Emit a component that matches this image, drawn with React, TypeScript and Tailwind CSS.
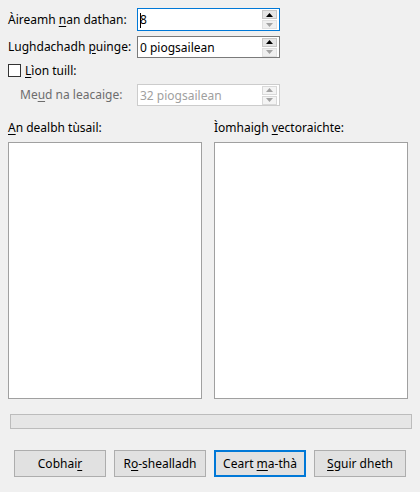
import React from "react";

const font = { fontFamily: '"Noto Sans", "Segoe UI", "Liberation Sans", sans-serif' };

function U({ children }: { children: React.ReactNode }) {
  return <span className="underline underline-offset-2 decoration-1">{children}</span>;
}

function Arrow({ up, dim }: { up?: boolean; dim?: boolean }) {
  return (
    <svg width="7" height="4" viewBox="0 0 7 4" className="block">
      {up ? (
        <polygon points="3.5,0 7,4 0,4" fill={dim ? "#a3a3a3" : "#000"} />
      ) : (
        <polygon points="0,0 7,0 3.5,4" fill={dim ? "#a3a3a3" : "#000"} />
      )}
    </svg>
  );
}

function Spin({
  value,
  focused,
  disabled,
  caret,
}: {
  value: string;
  focused?: boolean;
  disabled?: boolean;
  caret?: boolean;
}) {
  const border = focused
    ? "border-[#0078d7]"
    : disabled
    ? "border-[#cccccc]"
    : "border-[#7a7a7a]";
  return (
    <div
      className={`flex h-full w-[143px] items-center border bg-white ${border} ${
        disabled ? "bg-[#f0f0f0]" : ""
      }`}
    >
      <div
        className={`relative flex-1 pl-[2px] pt-px text-[12px] ${
          disabled ? "text-[#a0a0a0]" : "text-black"
        }`}
      >
        {caret && (
          <span className="absolute left-[2px] top-0 h-[15px] w-px bg-black" />
        )}
        {value}
      </div>
      <div className="mr-[2px] flex h-[19px] w-[15px] flex-col gap-px">
        <div
          className={`flex flex-1 items-center justify-center border ${
            disabled ? "border-[#d9d9d9] bg-[#f4f4f4]" : "border-[#c7c7c7] bg-[#e5e5e5]"
          }`}
        >
          <Arrow up dim={disabled} />
        </div>
        <div
          className={`flex flex-1 items-center justify-center border ${
            disabled ? "border-[#d9d9d9] bg-[#f4f4f4]" : "border-[#e0e0e0] bg-[#efefef]"
          }`}
        >
          <Arrow dim />
        </div>
      </div>
    </div>
  );
}

function Btn({ children, primary }: { children: React.ReactNode; primary?: boolean }) {
  return (
    <div
      className={`flex h-[27px] items-center justify-center bg-[#e1e1e1] text-[12px] text-black ${
        primary ? "border-2 border-[#0078d7]" : "border border-[#adadad]"
      }`}
    >
      <span>{children}</span>
    </div>
  );
}

export default function App() {
  return (
    <div
      className="flex h-[492px] w-[420px] flex-col bg-[#f0f0f0] pt-[8px] text-[12px] leading-none text-black"
      style={font}
    >
      <div className="flex h-[23px] items-center pl-[8px]">
        <div className="w-[129px]">
          Àireamh <U>n</U>an dathan:
        </div>
        <Spin value="8" focused caret />
      </div>
      <div className="mt-[5px] flex h-[22px] items-center pl-[8px]">
        <div className="w-[129px]">
          Lughdachadh <U>p</U>uinge:
        </div>
        <Spin value="0 piogsailean" />
      </div>
      <div className="mt-[6px] flex h-[13px] items-center pl-[8px]">
        <div className="h-[13px] w-[13px] border border-[#333333] bg-white" />
        <div className="ml-[4px]">
          <U>L</U>ìon tuill:
        </div>
      </div>
      <div className="mt-[7px] flex h-[22px] items-center pl-[20px]">
        <div className="w-[117px] text-[#6d6d6d]">
          Me<U>u</U>d na leacaige:
        </div>
        <Spin value="32 piogsailean" disabled />
      </div>

      <div className="mt-[14px] flex h-[16px] items-center pl-[8px]">
        <div className="w-[206px]">
          <U>A</U>n dealbh tùsail:
        </div>
        <div>
          Ìomhaigh <U>v</U>ectoraichte:
        </div>
      </div>
      <div className="mt-[6px] flex gap-[12px] pl-[8px]">
        <div className="h-[257px] w-[194px] border border-[#a0a0a0] bg-white" />
        <div className="h-[257px] w-[194px] border border-[#a0a0a0] bg-white" />
      </div>

      <div className="ml-[10px] mt-[15px] h-[15px] w-[402px] border border-[#bcbcbc] bg-[#e6e6e6]" />

      <div className="ml-[14px] mt-[21px] grid w-[392px] grid-cols-4 gap-[8px]">
        <Btn>
          Cobhai<U>r</U>
        </Btn>
        <Btn>
          R<U>o</U>-shealladh
        </Btn>
        <Btn primary>
          Ceart <U>m</U>a-thà
        </Btn>
        <Btn>
          <U>S</U>guir dheth
        </Btn>
      </div>
    </div>
  );
}
